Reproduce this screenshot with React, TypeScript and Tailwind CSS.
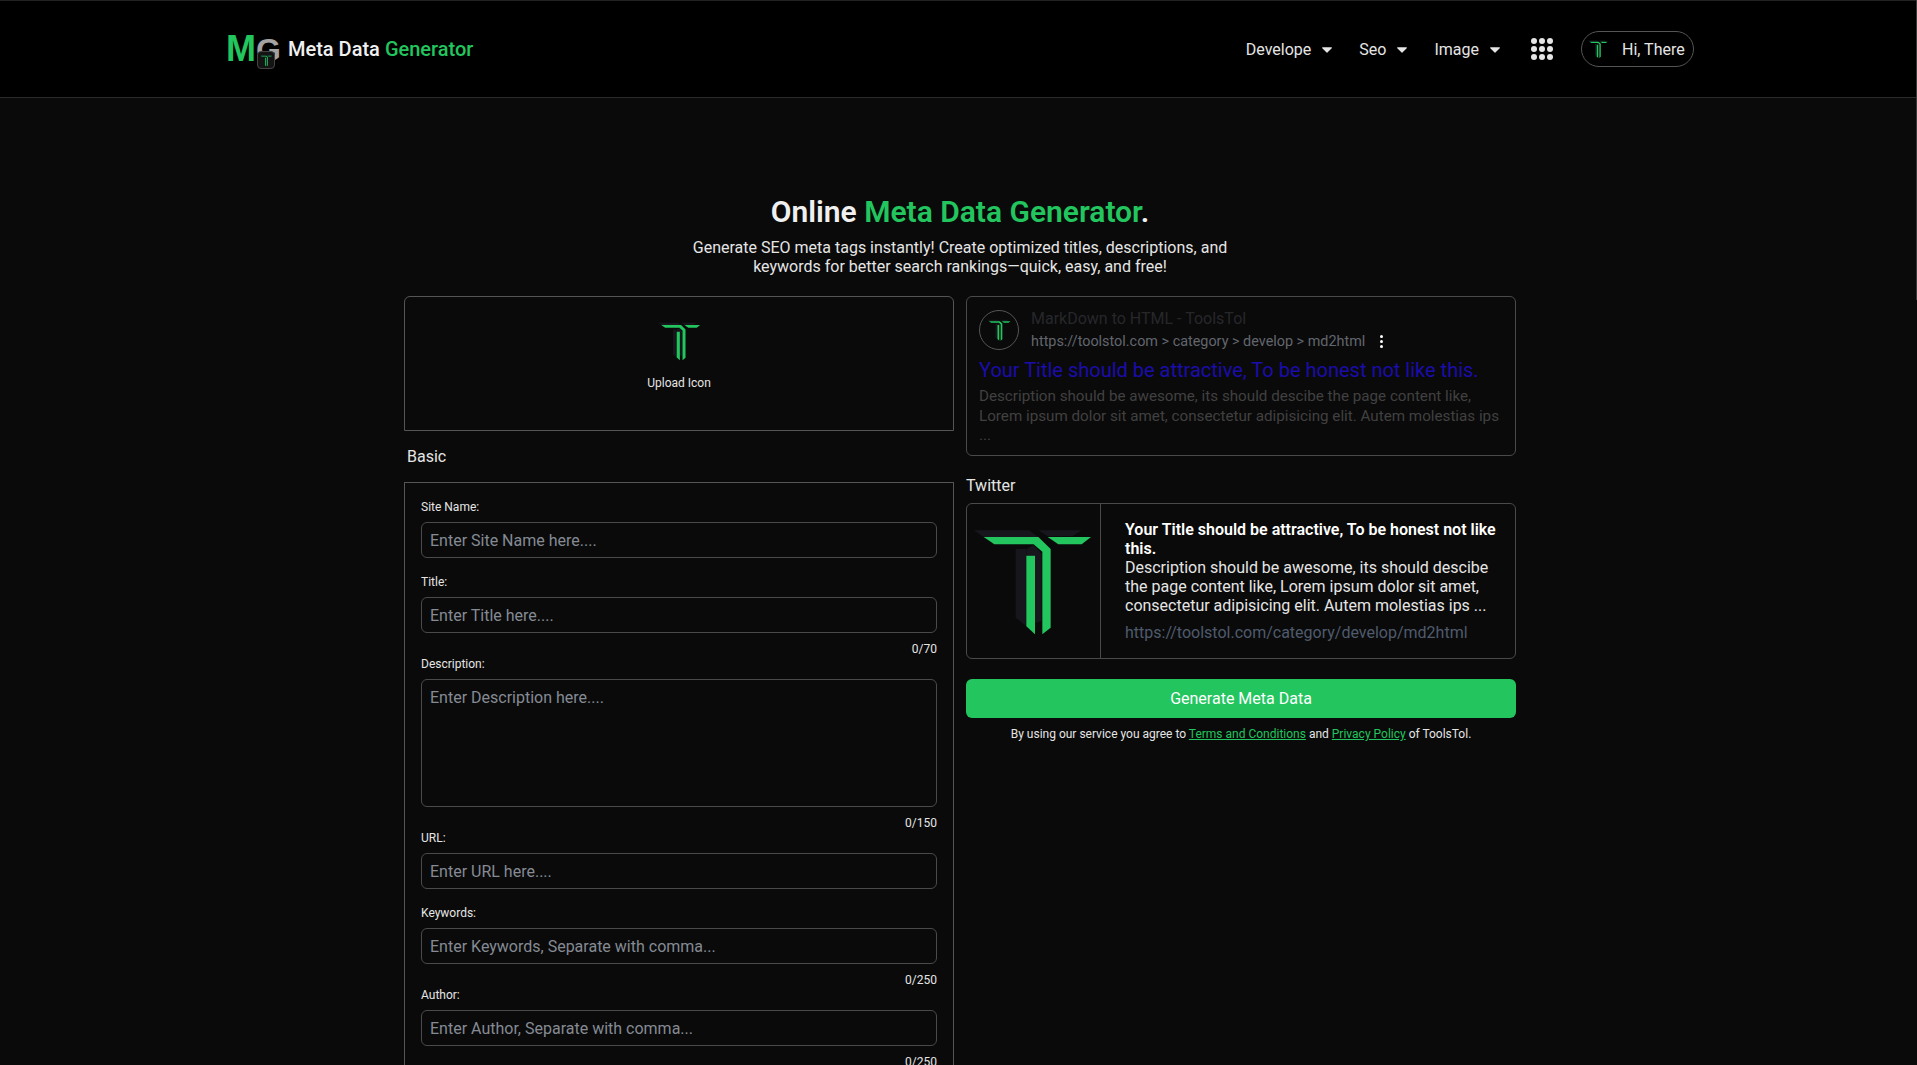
import React from "react";

const font = { fontFamily: "Roboto, sans-serif" };

const TLogo = ({ className }: { className: string }) => (
  <svg viewBox="0 0 390 360" className={className}>
    <g fill="#16161c">
      <polygon points="14,28 180,28 208,48 44,48" />
      <polygon points="208,28 338,28 310,46 236,46" />
      <polygon points="140,84 172,84 172,316 140,290" />
      <polygon points="172,84 194,72 218,98 218,300 198,306 198,104 172,104" />
    </g>
    <g fill="#22c55e">
      <polygon points="44,48 208,48 245,84 245,320 220,340 220,92 194,70 76,70" />
      <polygon points="172,104 198,104 198,340 172,316" />
      <polygon points="236,48 366,48 338,70 268,70" />
    </g>
  </svg>
);

const Caret = () => (
  <svg viewBox="0 0 10 6" className="ml-[11px] h-[6px] w-[10px]">
    <path d="M0.6 0.3h8.8a.5 .5 0 0 1 .35 .85L5.4 5.6a.6 .6 0 0 1-.8 0L.25 1.15A.5 .5 0 0 1 .6 .3z" fill="#e5e5e5" />
  </svg>
);

const NavItem = ({ label, className }: { label: string; className: string }) => (
  <div className={`flex items-center pt-[2px] text-base text-[#e5e5e5] ${className}`}>
    {label}
    <Caret />
  </div>
);

const Label = ({ text }: { text: string }) => (
  <label className="mb-[7px] block h-4 text-xs leading-4 text-[#e5e5e5]">{text}</label>
);

const Count = ({ text }: { text: string }) => (
  <div className="mt-2 h-[15px] text-right text-xs leading-4 text-[#e5e5e5]">{text}</div>
);

const inputCls =
  "block h-9 w-full rounded-md border border-[#4a4a4a] bg-transparent px-2 text-base text-white outline-none placeholder:text-[#858a94]";

const Field = ({ label, placeholder, count }: { label: string; placeholder: string; count?: string }) => (
  <div className={count ? "" : "mb-4"}>
    <Label text={label} />
    <input className={inputCls} placeholder={placeholder} readOnly />
    {count && <Count text={count} />}
  </div>
);

export default function App() {
  return (
    <div className="h-[1065px] overflow-hidden bg-[#0a0a0a] text-white" style={font}>
      <div className="fixed right-0 top-0 h-[300px] w-px bg-[#3a3a3a]" />
      <header className="h-[98px] border-y border-t-[#222222] border-b-[#2a2a2a] bg-black">
        <div className="mx-auto flex h-full w-[1471px] items-center justify-between pl-[3px]">
          <div className="flex items-center">
            <div className="relative h-[36px] w-[51px] whitespace-nowrap font-['Liberation_Sans'] text-[36px] font-bold leading-[36px]">
              <span className="text-[#22c55e]">M</span>
              <span className="text-[32px] text-[#a3a3a3]">G</span>
              <div className="absolute left-[31px] top-[20px] flex h-[18px] w-[18px] items-center justify-center rounded-sm border border-[#444444] bg-[#141414]">
                <TLogo className="h-[13px] w-[14px]" />
              </div>
            </div>
            <div className="ml-[11px] text-xl font-medium text-[#f0f0f0]">
              Meta Data <span className="text-[#22c55e]">Generator</span>
            </div>
          </div>
          <div className="flex items-center">
            <NavItem label="Develope" className="mr-[27px]" />
            <NavItem label="Seo" className="mr-[27px]" />
            <NavItem label="Image" className="mr-[31px]" />
            <div className="mr-[28px] grid grid-cols-3 gap-[2px]">
              {Array.from({ length: 9 }).map((_, i) => (
                <span key={i} className="h-[6px] w-[6px] rounded-full bg-[#e5e5e5]" />
              ))}
            </div>
            <div className="flex h-9 w-[113px] items-center rounded-full border border-[#555555] pl-[5px] text-base text-[#e5e5e5]">
              <TLogo className="h-[20px] w-[22px]" />
              <span className="ml-[13px] pt-[1px]">Hi, There</span>
            </div>
          </div>
        </div>
      </header>

      <main className="ml-[404px] w-[1112px] pt-[94px]">
        <div className="text-center">
          <h1 className="h-[40px] text-[30px] font-semibold leading-10 text-[#f0f0f0]">
            Online <span className="text-[#22c55e]">Meta Data Generator</span>.
          </h1>
          <p className="mt-[6px] text-base leading-[19.2px] text-[#e5e5e5]">
            Generate SEO meta tags instantly! Create optimized titles, descriptions, and
            <br />
            keywords for better search rankings—quick, easy, and free!
          </p>
        </div>

        <div className="mt-5 grid grid-cols-2 items-start gap-3">
          <div>
            <div className="flex h-[135px] flex-col items-center rounded-t-md border border-[#555555] pt-[22px]">
              <TLogo className="h-[44px] w-[47px]" />
              <div className="mt-3 text-xs leading-4 text-[#e5e5e5]">Upload Icon</div>
            </div>
            <div className="mt-4 h-[19px] pl-[3px] text-base leading-[19px] text-[#e5e5e5]">Basic</div>
            <div className="mt-[16px] border border-b-0 border-[#555555] px-4 pb-10 pt-4">
              <Field label="Site Name:" placeholder="Enter Site Name here...." />
              <Field label="Title:" placeholder="Enter Title here...." count="0/70" />
              <Label text="Description:" />
              <textarea
                className="block h-[128px] w-full resize-none rounded-md border border-[#4a4a4a] bg-transparent px-2 py-[6px] text-base text-white outline-none placeholder:text-[#858a94]"
                placeholder="Enter Description here...."
                readOnly
              />
              <Count text="0/150" />
              <Field label="URL:" placeholder="Enter URL here...." />
              <Field label="Keywords:" placeholder="Enter Keywords, Separate with comma..." count="0/250" />
              <Field label="Author:" placeholder="Enter Author, Separate with comma..." count="0/250" />
            </div>
          </div>

          <div>
            <div className="h-[160px] rounded-md border border-[#4a4a4a] px-3 pt-[13px]">
              <div className="flex">
                <div className="flex h-10 w-10 items-center justify-center rounded-full border border-[#555555]">
                  <TLogo className="h-[24px] w-[26px]" />
                </div>
                <div className="ml-3">
                  <div className="-mt-[1px] text-base leading-5 text-[#27272a]">MarkDown to HTML - ToolsTol</div>
                  <div className="mt-[3px] flex items-center text-[14.4px] leading-5 text-[#62666e]">
                    https://toolstol.com &gt; category &gt; develop &gt; md2html
                    <span className="-mt-[2px] ml-[15px] flex flex-col gap-[2px]">
                      <i className="block h-[3px] w-[3px] rounded-full bg-white" />
                      <i className="block h-[3px] w-[3px] rounded-full bg-white" />
                      <i className="block h-[3px] w-[3px] rounded-full bg-white" />
                    </span>
                  </div>
                </div>
              </div>
              <div className="mt-[5px] text-xl leading-[26px] text-[#1a0dab]">
                Your Title should be attractive, To be honest not like this.
              </div>
              <div className="mt-[4px] text-[15.2px] leading-[19.5px] text-[#414141]">
                Description should be awesome, its should descibe the page content like, Lorem ipsum dolor sit amet,
                consectetur adipisicing elit. Autem molestias ips ...
              </div>
            </div>

            <div className="mt-[20px] h-[19px] text-base leading-[19px] text-[#e5e5e5]">Twitter</div>
            <div className="mt-2 flex h-[156px] rounded-md border border-[#4a4a4a]">
              <div className="flex w-[134px] shrink-0 items-center justify-center border-r border-[#4a4a4a]">
                <TLogo className="h-[120px] w-[130px]" />
              </div>
              <div className="pl-[24px] pr-[10px] pt-[16px] text-base leading-[19px]">
                <div className="font-semibold text-white">Your Title should be attractive, To be honest not like this.</div>
                <div className="text-[#e5e5e5]">
                  Description should be awesome, its should descibe the page content like, Lorem ipsum dolor sit amet,
                  consectetur adipisicing elit. Autem molestias ips ...
                </div>
                <div className="mt-2 text-[#4f5b6d]">https://toolstol.com/category/develop/md2html</div>
              </div>
            </div>

            <button className="mt-[20px] h-[39px] w-full rounded-md bg-[#22c55e] text-base text-white">
              Generate Meta Data
            </button>
            <div className="mt-2 text-center text-xs leading-4 text-[#e5e5e5]">
              By using our service you agree to{" "}
              <a className="text-[#22c55e] underline">Terms and Conditions</a> and{" "}
              <a className="text-[#22c55e] underline">Privacy Policy</a> of ToolsTol.
            </div>
          </div>
        </div>
      </main>
    </div>
  );
}
